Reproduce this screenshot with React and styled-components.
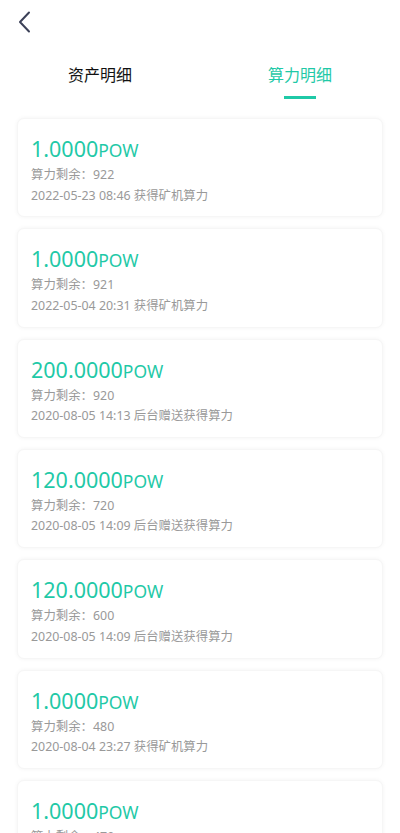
import React from "react";
import styled, { createGlobalStyle } from "styled-components";

const Global = createGlobalStyle`
  html, body { margin: 0; padding: 0; background: #fff; }
  body { font-family: "Noto Sans", "Noto Sans CJK SC", sans-serif; }
  * { box-sizing: border-box; }
`;

const Page = styled.div`
  width: 400px;
  height: 833px;
  background: #fff;
  overflow: hidden;
`;

const Header = styled.div`
  height: 46px;
  display: flex;
  align-items: center;
  padding-left: 14px;
`;

const BackButton = styled.button`
  border: 0;
  background: none;
  padding: 0;
  width: 20px;
  height: 24px;
  display: flex;
  align-items: center;
  justify-content: center;
  margin-top: -2px;
`;

const Tabs = styled.div`
  display: flex;
  height: 60px;
`;

const Tab = styled.div`
  flex: 1;
  display: flex;
  flex-direction: column;
  align-items: center;
  justify-content: flex-start;
  padding-top: 17px;
  font-family: "Noto Sans CJK SC", sans-serif;
  font-size: 16px;
  line-height: 22px;
  color: ${(p) => (p.$active ? "#1fc9a7" : "#111")};
`;

const Underline = styled.div`
  width: 32px;
  height: 2.5px;
  margin-top: 11px;
  background: ${(p) => (p.$active ? "#1fc9a7" : "transparent")};
`;

const List = styled.div`
  display: flex;
  flex-direction: column;
  gap: 11px;
  padding: 12px 17px 0;
`;

const Card = styled.div`
  height: 99.33px;
  flex-shrink: 0;
  border-radius: 7px;
  background: #fff;
  box-shadow: 0 0 4px rgba(0, 0, 0, 0.05);
  border: 1px solid #f6f6f6;
  padding: 15px 13px 0;
`;

const Amount = styled.div`
  color: #1fc9a7;
  font-size: 21.5px;
  line-height: 30px;
  font-family: "Noto Sans", sans-serif;
`;

const Unit = styled.span`
  font-size: 17.5px;
`;

const Info = styled.div`
  color: #999;
  font-size: 12.4px;
  line-height: 20.5px;
  font-family: "Noto Sans", "Noto Sans CJK SC", sans-serif;
`;

const items = [
  ["1.0000", "922", "2022-05-23 08:46 获得矿机算力"],
  ["1.0000", "921", "2022-05-04 20:31 获得矿机算力"],
  ["200.0000", "920", "2020-08-05 14:13 后台赠送获得算力"],
  ["120.0000", "720", "2020-08-05 14:09 后台赠送获得算力"],
  ["120.0000", "600", "2020-08-05 14:09 后台赠送获得算力"],
  ["1.0000", "480", "2020-08-04 23:27 获得矿机算力"],
  ["1.0000", "479", "2020-08-04 23:20 获得矿机算力"],
];

export default function App() {
  return (
    <Page>
      <Global />
      <Header>
        <BackButton aria-label="back">
          <svg width="14" height="22" viewBox="0 0 14 22">
            <path d="M12 1.5 L3 11 L12 20.5" fill="none" stroke="#3c4158" strokeWidth="2" strokeLinecap="round" strokeLinejoin="round" />
          </svg>
        </BackButton>
      </Header>
      <Tabs>
        <Tab>
          资产明细
          <Underline />
        </Tab>
        <Tab $active>
          算力明细
          <Underline $active />
        </Tab>
      </Tabs>
      <List>
        {items.map(([amt, left, desc], i) => (
          <Card key={i}>
            <Amount>
              {amt}
              <Unit>POW</Unit>
            </Amount>
            <Info>算力剩余：{left}</Info>
            <Info>{desc}</Info>
          </Card>
        ))}
      </List>
    </Page>
  );
}
